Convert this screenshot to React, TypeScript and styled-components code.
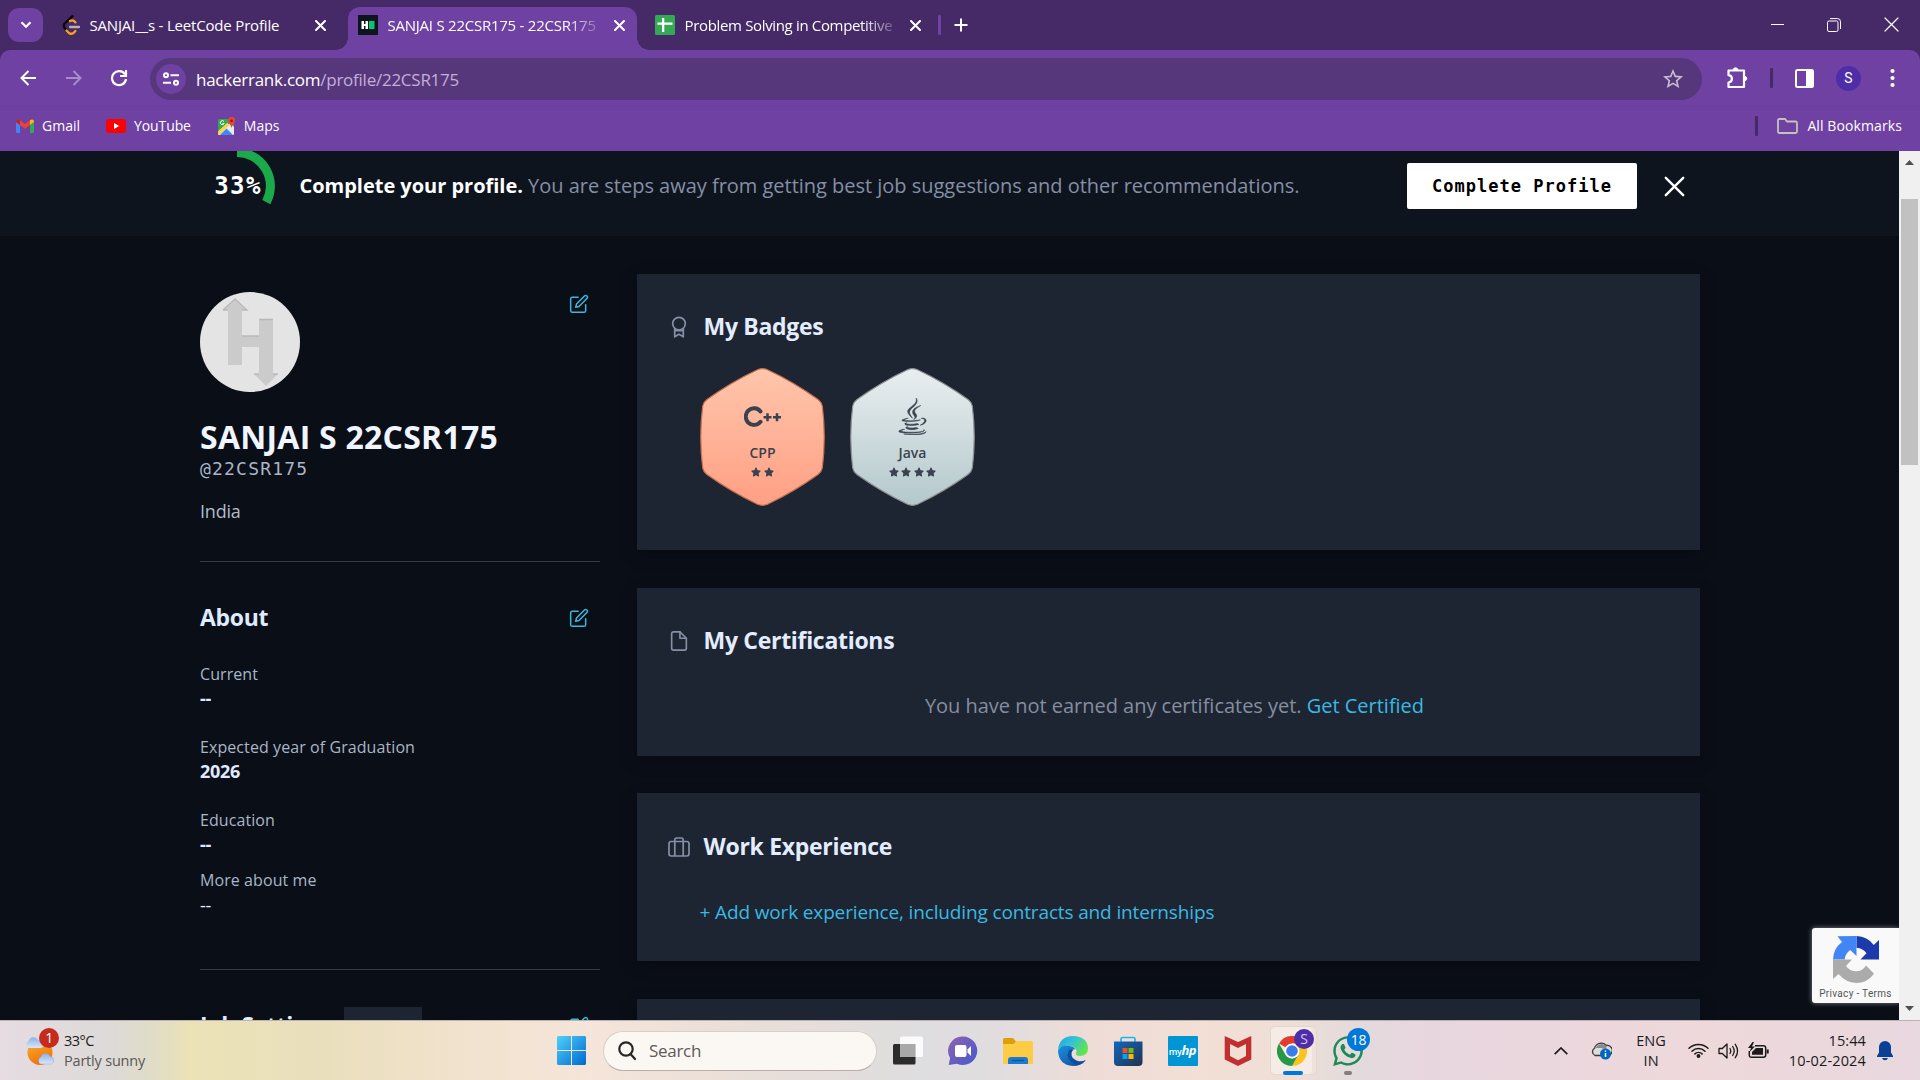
import React from "react";
import styled, { createGlobalStyle } from "styled-components";
import { FiEdit, FiFile } from "react-icons/fi";
import { FaJava, FaStar, FaWhatsapp } from "react-icons/fa";
import { MdStarOutline } from "react-icons/md";

const uiFont = `"Open Sans", "Noto Sans", sans-serif`;
const monoFont = `"DejaVu Sans Mono", monospace`;

const GlobalStyle = createGlobalStyle`
  * { box-sizing: border-box; }
  body { margin: 0; background: #0a0e17; font-family: ${uiFont}; overflow: hidden; }
  h1, h2, p { margin: 0; }
  svg { display: block; flex: none; }
`;

const Screen = styled.div`
  width: 1920px;
  height: 1080px;
  display: grid;
  grid-template-rows: 50px 57px 44px 869px 60px;
  background: #462a67;
  overflow: hidden;
`;

/* ---------- browser chrome ---------- */

const Label = styled.span<{ $size: number; $ls?: number; $color?: string; $w?: number }>`
  font-size: ${(p) => p.$size}px;
  letter-spacing: ${(p) => p.$ls ?? 0}px;
  color: ${(p) => p.$color ?? "#fff"};
  font-weight: ${(p) => p.$w ?? 400};
  white-space: nowrap;
  line-height: 20px;
`;

const TabStrip = styled.header`
  display: flex;
  align-items: flex-end;
  padding-left: 8px;
  background: #462a67;
`;

const TabSearch = styled.div`
  width: 35px;
  height: 34px;
  margin-bottom: 8px;
  border-radius: 11px;
  background: #6e41a2;
  display: grid;
  place-items: center;
`;

const Tab = styled.div<{ $width: number; $active?: boolean; $left: number; $right: number }>`
  width: ${(p) => p.$width}px;
  height: 43px;
  padding: 0 ${(p) => p.$right}px 7px ${(p) => p.$left}px;
  display: flex;
  align-items: center;
  background: ${(p) => (p.$active ? "#6e41a2" : "transparent")};
  border-radius: 12px 12px 0 0;
`;

const Flare = styled.div<{ $side: "left" | "right" }>`
  width: 12px;
  height: 12px;
  background: radial-gradient(circle at ${(p) => (p.$side === "left" ? "0 0" : "100% 0")}, transparent 11.5px, #6e41a2 12px);
`;

const TabTitle = styled(Label)<{ $fade?: boolean }>`
  flex: 1;
  margin: 0 18px 0 9.5px;
  ${(p) => p.$fade && "mask-image: linear-gradient(90deg, #000 calc(100% - 30px), rgba(0,0,0,.25) 100%);"}
`;

const StripEnd = styled.div`
  height: 43px;
  padding-bottom: 7px;
  display: flex;
  align-items: center;
  gap: 13px;
`;

const Divider = styled.div<{ $color: string }>`
  width: 3px;
  height: 20px;
  border-radius: 1px;
  background: ${(p) => p.$color};
`;

const WindowButtons = styled.div`
  margin-left: auto;
  height: 50px;
  padding: 0 21px 1px 0;
  display: flex;
  align-items: center;
  gap: 43px;
`;

const Toolbar = styled.div`
  background: #6e41a2;
  border-radius: 10px 10px 0 0;
  border-bottom: 1px solid #6a3e9d;
  padding: 8px 25px 6px 18px;
  display: flex;
  align-items: center;
`;

const NavButtons = styled.div`
  width: 132px;
  display: flex;
  align-items: center;
  gap: 27.5px;
  padding: 0 0 2px 1px;
`;

const AddressBar = styled.div`
  width: 1552px;
  height: 42px;
  border-radius: 21px;
  background: #57377b;
  display: flex;
  align-items: center;
  padding: 0 17px 0 6px;
`;

const SiteInfo = styled.div`
  width: 30px;
  height: 30px;
  border-radius: 50%;
  background: #6e41a2;
  display: grid;
  place-items: center;
  margin-right: 10px;
`;

const Url = styled(Label)`
  flex: 1;
  padding-top: 1px;
  span { color: #c3afd8; }
`;

const Actions = styled.div`
  flex: 1;
  display: grid;
  grid-template-columns: 22px 3px 19px 25px 5px;
  column-gap: 22px;
  align-items: center;
  padding: 0 0 2px 24px;
  svg:last-child { margin-left: 7px; }
`;

const Account = styled.div`
  width: 25px;
  height: 25px;
  border-radius: 50%;
  background: #4f2da8;
  color: #fff;
  font: 14px/25px Roboto, sans-serif;
  text-align: center;
`;

const Bookmarks = styled.div`
  background: #6e41a2;
  display: flex;
  align-items: center;
  padding: 0 18px 6px 16px;
`;

const Bookmark = styled.div<{ $gap: number; $after: number }>`
  display: flex;
  align-items: center;
  gap: ${(p) => p.$gap}px;
  margin-right: ${(p) => p.$after}px;
`;

const AllBookmarks = styled.div`
  margin-left: auto;
  display: flex;
  align-items: center;
  svg { margin: 0 9px 0 19px; }
`;

/* ---------- page ---------- */

const Viewport = styled.div`
  display: grid;
  grid-template-columns: 1899px 21px;
  overflow: hidden;
  min-height: 0;
`;

const Page = styled.main`
  position: relative;
  background: #0a0e17;
  overflow: hidden;
  height: 869px;
`;

const Banner = styled.section`
  height: 85px;
  background: #0e141e;
  display: flex;
  align-items: flex-start;
  padding-left: 199px;
`;

const Progress = styled.div`
  width: 76px;
  height: 76px;
  margin-top: -3px;
  margin-right: 24.5px;
  display: grid;
  place-items: center;
  > * { grid-area: 1 / 1; }
`;

const Percent = styled.span`
  font: 700 24px/30px ${monoFont};
  letter-spacing: 1.4px;
  margin-left: 2px;
  color: #fff;
`;

const BannerText = styled.p`
  width: 1107.5px;
  font-size: 20px;
  line-height: 30px;
  margin-top: 20px;
  letter-spacing: -0.018px;
  color: #858fa5;
  white-space: nowrap;
  b { color: #fff; }
`;

const CompleteButton = styled.button`
  width: 230px;
  height: 46px;
  margin: 12px 27px 0 0;
  border: 0;
  padding: 0;
  border-radius: 2px;
  background: #fff;
  color: #000;
  font: 700 17px ${monoFont};
  letter-spacing: 1px;
`;

const CloseIcon = styled.svg`
  margin-top: 25px;
`;

const Columns = styled.div`
  display: grid;
  grid-template-columns: 400px 1063px;
  column-gap: 37px;
  padding-left: 200px;
`;

const Sidebar = styled.aside`
  padding-top: 56px;
`;

const SideHead = styled.div<{ $iconTop: number }>`
  display: flex;
  justify-content: space-between;
  align-items: flex-start;
  padding-right: 11px;
  > svg:last-child { margin-top: ${(p) => p.$iconTop}px; }
`;

const Name = styled.h1`
  margin-top: 25px;
  font-size: 32px;
  line-height: 40px;
  letter-spacing: 0.25px;
  color: #f0f5ff;
  white-space: nowrap;
`;

const Handle = styled.p`
  font: 18px/24px ${monoFont};
  letter-spacing: 1.2px;
  color: #a9b6c6;
`;

const Country = styled.p`
  margin-top: 18px;
  font-size: 18px;
  line-height: 24px;
  letter-spacing: -0.2px;
  color: #b1bccb;
`;

const Rule = styled.div<{ $top: number }>`
  height: 1px;
  margin: ${(p) => p.$top}px 0 39px;
  background: #333946;
`;

const SideTitle = styled.h2<{ $width?: number }>`
  width: ${(p) => (p.$width ? `${p.$width}px` : "auto")};
  font-size: 23px;
  line-height: 32px;
  letter-spacing: -0.3px;
  color: #dfebff;
  white-space: nowrap;
`;

const Field = styled.div<{ $top: number; $plain?: boolean }>`
  margin-top: ${(p) => p.$top}px;
  font-size: 16px;
  line-height: 24px;
  letter-spacing: 0.08px;
  color: #a9b6c6;
  b {
    display: block;
    font-size: 18px;
    letter-spacing: -0.3px;
    color: #e0eaff;
    font-weight: ${(p) => (p.$plain ? 400 : 700)};
    padding-top: ${(p) => (p.$plain ? 1 : 0)}px;
  }
`;

const JobHead = styled.div`
  display: flex;
  align-items: flex-start;
  padding-right: 11px;
  > svg { margin: 7px 0 0 auto; }
`;

const Pill = styled.div`
  width: 78px;
  height: 32px;
  margin-top: -2px;
  background: #1e2532;
`;

const Cards = styled.div`
  padding-top: 38px;
  display: grid;
  row-gap: 37.5px;
`;

const Card = styled.section<{ $height: number; $top?: number }>`
  height: ${(p) => p.$height}px;
  padding: ${(p) => p.$top ?? 36}px 31px 0;
  background: #1e2532;
  box-shadow: 0 5px 15px rgba(0, 0, 0, 0.25);
`;

const CardHead = styled.div`
  display: grid;
  grid-template-columns: 22px auto;
  column-gap: 13.5px;
  align-items: center;
  justify-items: center;
  justify-content: start;
  svg { margin-top: 2px; }
`;

const CardTitle = styled.h2`
  font-size: 23px;
  line-height: 32px;
  letter-spacing: -0.3px;
  color: #e3edff;
`;

const CardText = styled.p<{ $center?: boolean }>`
  margin-top: 36px;
  padding-left: ${(p) => (p.$center ? 12 : 31.5)}px;
  font-size: ${(p) => (p.$center ? 20 : 19)}px;
  letter-spacing: ${(p) => (p.$center ? -0.02 : -0.14)}px;
  line-height: 28px;
  text-align: ${(p) => (p.$center ? "center" : "left")};
  color: #858ea0;
  a { color: #3ab9e2; }
`;

const BadgeRow = styled.div`
  display: flex;
  gap: 25px;
  margin: 26px 0 0 32px;
`;

const Hex = styled.div`
  width: 125px;
  height: 138px;
  display: grid;
  > * { grid-area: 1 / 1; }
`;

const HexBody = styled.div`
  display: flex;
  flex-direction: column;
  align-items: center;
  color: #39424e;
`;

const HexIcon = styled.div`
  height: 37px;
  margin-top: 30px;
  display: grid;
  place-items: center;
`;

const HexName = styled.span`
  margin-top: 8px;
  font-size: 14px;
  line-height: 20px;
  font-weight: 600;
`;

const Stars = styled.div`
  display: flex;
  gap: 2.3px;
  margin-top: 4px;
`;

const JavaIcon = styled(FaJava)`
  stroke: #39424e;
  stroke-width: 7px;
`;

const Captcha = styled.div`
  position: absolute;
  right: 0;
  top: 777px;
  width: 87px;
  height: 75px;
  padding-top: 8px;
  border-radius: 3px 0 0 3px;
  background: #f9f9f9;
  box-shadow: 0 0 5px #808080;
  display: flex;
  flex-direction: column;
  align-items: center;
  gap: 4px;
  font: 10px/14px Roboto, sans-serif;
  letter-spacing: 0.3px;
  color: #555;
  svg { margin-left: 2px; }
`;

const Scrollbar = styled.div`
  background: #f0f0f0;
  display: flex;
  flex-direction: column;
  align-items: center;
  padding: 9px 0;
`;

const Thumb = styled.div`
  width: 17px;
  height: 266px;
  margin: 34px 0 auto;
  background: #c1c1c1;
`;

/* ---------- taskbar ---------- */

const Taskbar = styled.footer`
  border-top: 1px solid #bdb2ad;
  display: grid;
  grid-template-columns: 532px 1fr auto;
  align-items: center;
  padding: 0 27px 1px 25px;
  background: linear-gradient(90deg, #e6dce2 0, #dddad8 110px, #e0dcc9 150px, #ebe2b6 190px, #eadfbd 330px, #f0e2cc 450px, #f5e5da 590px, #ebdfd8 720px, #dedddf 920px, #e1dddf 1000px, #efdcd6 1100px, #f2dfd5 1200px, #eedfd6 1290px, #e3dadd 1360px, #e8d6de 1430px, #ead7de 1540px, #eed8da 1700px, #e8d8df 1920px);
`;

const Weather = styled.div`
  display: flex;
  align-items: center;
  gap: 7px;
  height: 59px;
`;

const TwoLines = styled.div<{ $align?: string }>`
  display: flex;
  flex-direction: column;
  text-align: ${(p) => p.$align ?? "left"};
`;

const Center = styled.div`
  display: flex;
  align-items: center;
`;

const SearchBox = styled.div`
  width: 274px;
  height: 40px;
  margin: 0 3px 0 17px;
  border-radius: 20px;
  border: 1px solid #d9cfc8;
  border-bottom-color: #b9aea9;
  background: #fbf7f3;
  display: flex;
  align-items: center;
  gap: 12px;
  padding-left: 13px;
`;

const Slot = styled.div<{ $width?: number }>`
  position: relative;
  width: ${(p) => p.$width ?? 55}px;
  height: 59px;
  display: grid;
  place-items: center;
`;

const ActiveTile = styled.div`
  width: 47px;
  height: 49px;
  margin-left: 2px;
  padding-right: 4px;
  border-radius: 5px;
  background: #f6ece6;
  border: 1px solid #e3d8d1;
  box-shadow: inset -4px 0 #efe2da;
  display: grid;
  place-items: center;
`;

const Count = styled.span<{ $bg: string; $size: number; $x: number; $y: number; $color?: string }>`
  position: absolute;
  left: ${(p) => p.$x}px;
  top: ${(p) => p.$y}px;
  width: ${(p) => p.$size}px;
  height: ${(p) => p.$size}px;
  border-radius: 50%;
  background: ${(p) => p.$bg};
  color: ${(p) => p.$color ?? "#fff"};
  font-size: 14px;
  line-height: ${(p) => p.$size}px;
  letter-spacing: -0.3px;
  text-align: center;
`;

const Running = styled.span<{ $width: number; $color: string; $x: number }>`
  position: absolute;
  left: ${(p) => p.$x}px;
  bottom: 5px;
  width: ${(p) => p.$width}px;
  height: 4px;
  border-radius: 2px;
  background: ${(p) => p.$color};
`;

const Tray = styled.div`
  display: flex;
  align-items: center;
`;

const TrayItem = styled.div<{ $after: number }>`
  margin-right: ${(p) => p.$after}px;
`;

const HpTile = styled.div`
  width: 30px;
  height: 30px;
  background: #0096d6;
  color: #fff;
  font-size: 9px;
  line-height: 29px;
  text-align: center;
  letter-spacing: -0.4px;
  border-radius: 1px;
  font-weight: 600;
  i { font-size: 13px; font-weight: 700; }
`;

/* ---------- drawings ---------- */

const Cross = ({ size = 10, w = 2, color = "#fff" }: { size?: number; w?: number; color?: string }) => (
  <svg width={size} height={size} viewBox={`0 0 ${size} ${size}`} stroke={color} strokeWidth={w} strokeLinecap="round">
    <path d={`M1 1L${size - 1} ${size - 1}M${size - 1} 1L1 ${size - 1}`} />
  </svg>
);

const LeetCodeIcon = () => (
  <svg width="18" height="20" viewBox="0 0 18 20" fill="none" strokeLinecap="round" strokeLinejoin="round" strokeWidth="2.3">
    <path d="M10.5 1.2L2.6 8.6Q1 10.5 2.6 13L5 16" stroke="#070706" />
    <path d="M8 6Q10 4.600 12 6L13.400 7.400M4.500 15.500L7 18Q9 19.500 11.500 18L13.400 16" stroke="#ffa116" />
    <path d="M8 12H17" stroke="#b3b3b3" />
  </svg>
);

const HackerRankIcon = () => (
  <svg width="20" height="20" viewBox="0 0 20 20">
    <path fill="#0e141e" d="M0 0h20v20H0z" />
    <path fill="#fff" d="M3.500 6H6v3h1.500V6H10v8H7.500v-3H6v3H3.500z" />
    <path fill="#05c770" d="M11 6h5.500v8H11z" />
  </svg>
);

const SheetsIcon = () => (
  <svg width="20" height="20" viewBox="0 0 20 20">
    <rect width="20" height="20" rx="1.500" fill="#34a853" />
    <path fill="#fff" d="M2.500 7.500H7V3h2.300v4.500h8.200v2.300H9.300V17H7V9.800H2.500z" />
  </svg>
);

const GmailIcon = () => (
  <svg width="18" height="14" viewBox="0 0 18 14">
    <path fill="#4285f4" d="M0 3l4 3v8H1.300Q0 14 0 12.700z" />
    <path fill="#34a853" d="M14 6l4-3v9.700Q18 14 16.700 14H14z" />
    <path fill="#ea4335" d="M4 1.300L9 5l5-3.700V6L9 9.800 4 6z" />
    <path fill="#c5221f" d="M0 2.500Q0 .5 2 .4 3 .4 4 1.300V6L0 3z" />
    <path fill="#fbbc04" d="M18 2.500Q18 .5 16 .4q-1 0-2 .9V6l4-3z" />
  </svg>
);

const YouTubeIcon = () => (
  <svg width="20" height="14" viewBox="0 0 20 14">
    <rect width="20" height="14" rx="3" fill="#f00" />
    <path d="M8 4l5.200 3L8 10z" fill="#fff" />
  </svg>
);

const MapsIcon = () => (
  <svg width="18" height="18" viewBox="0 0 18 18">
    <rect x="0" y="2" width="16" height="16" rx="1.500" fill="#34a853" />
    <path d="M0 17L12 6l4 4v7q0 1-1 1H1z" fill="#e8eaed" />
    <path d="M2 18l6.500-6.500L15 18z" fill="#4285f4" />
    <path d="M0 14L9 5.500l2.500 2.500L1 18 0 17z" fill="#fbd24d" />
    <path d="M0 3.500Q0 2 1.500 2H10L8.500 6.500 0 14z" fill="#34a853" />
    <path d="M6 4.500A2 2 0 1 0 6.200 6.500H4.500" fill="none" stroke="#fff" strokeWidth="1" />
    <path d="M13.500 11q-.4-2.500-2-4-1.400-1.300-1.400-3.400a3.500 3.500 0 0 1 7 0q0 2-1.500 3.400-1.600 1.500-2.100 4z" fill="#ea4335" />
    <circle cx="13.600" cy="3.700" r="1.300" fill="#8c1b13" />
  </svg>
);

const AvatarLogo = () => (
  <svg width="100" height="100" viewBox="0 0 100 100">
    <circle cx="50" cy="50" r="50" fill="#e4e4e4" />
    <path d="M23 18L35 7l12 11h-5v26h17V27h14v55h5L66 94 54 82h5V55H42v18H28V18z" fill="#cbcbcb" />
    <path d="M23 18L35 7l12 11h-5M42 44h17M59 27.500h14M28 18h-5M54 82h5M73 82h5" fill="none" stroke="#b9b9b9" strokeWidth="1.300" />
  </svg>
);

const HexShape = ({ id, from, to, stroke }: { id: string; from: string; to: string; stroke: string }) => (
  <svg width="125" height="138" viewBox="0 0 125 138">
    <defs>
      <linearGradient id={id} x1="0" y1="0" x2="0" y2="1">
        <stop stopColor={from} />
        <stop offset="1" stopColor={to} />
      </linearGradient>
    </defs>
    <path
      d="M57.500 1.800Q62.500-.4 67.500 1.800C84 9.500 104 21.500 118 31.500Q121.500 34 122.300 38C124.800 58 124.800 80 122.300 100Q121.500 104 118 106.500C104 116.500 84 128.500 67.500 136.200Q62.500 138.400 57.500 136.200C41 128.500 21 116.500 7 106.500Q3.500 104 2.700 100C.2 80 .2 58 2.700 38Q3.500 34 7 31.500C21 21.500 41 9.500 57.500 1.800Z"
      fill={`url(#${id})`}
      stroke={stroke}
      strokeWidth="1.200"
    />
  </svg>
);

const CppIcon = () => (
  <svg width="37" height="21" viewBox="0 0 37 21" fill="none" stroke="#39424e">
    <path d="M16.500 5.400A8.300 8.300 0 1 0 16.500 15.800" strokeWidth="4" strokeLinecap="round" />
    <path d="M19.500 11.200h8M23.500 7.200v8M29 11.200h8M33 7.200v8" strokeWidth="2.500" />
  </svg>
);

const AwardIcon = () => (
  <svg width="16" height="22" viewBox="0 0 16 22" fill="none" stroke="#858fa5" strokeWidth="1.700" strokeLinejoin="round">
    <circle cx="8" cy="7.600" r="6.300" />
    <path d="M3.700 12.500V20.800L8 18.300l4.300 2.500v-8.300M3.700 14.600h8.600" />
  </svg>
);

const BriefcaseIcon = () => (
  <svg width="22" height="20" viewBox="0 0 22 20" fill="none" stroke="#858fa5" strokeWidth="1.700">
    <rect x="1" y="4.500" width="20" height="14.500" rx="2.200" />
    <path d="M6.800 19V3Q6.800 1 8.800 1h4.400q2 0 2 2v16" />
  </svg>
);

const RecaptchaLogo = () => (
  <svg width="47" height="47" viewBox="0 0 47 47">
    <path fill="#1c3aa9" d="M23.500 0q11 .3 17.200 9L46 4v19.500H27.500l6-6.300q-3.500-5-10-5.500z" />
    <path fill="#4285f4" d="M23.500 0v20l-6.300-6q-5 3.500-5.500 9.500H0Q.3 12.500 9 6L4.500.3z" />
    <path fill="#ababab" d="M0 23.500h19l-6 6.500q3.700 5.300 10.500 5.300 6 0 9.500-5.800l8 8.200Q34 47 23.500 47 12.500 46.500 5.600 38L0 43z" />
  </svg>
);

const WeatherIcon = () => (
  <svg width="32" height="32" viewBox="0 0 32 32">
    <defs>
      <linearGradient id="sun" x1="0" y1="0" x2="0.4" y2="1">
        <stop stopColor="#f9b52c" />
        <stop offset="1" stopColor="#f2700d" />
      </linearGradient>
      <linearGradient id="cloud" x1="0" y1="0" x2="0" y2="1">
        <stop stopColor="#8eb2e8" />
        <stop offset="1" stopColor="#d8e6fb" />
      </linearGradient>
    </defs>
    <circle cx="15" cy="17.500" r="12.500" fill="url(#sun)" />
    <path d="M3 13a4 4 0 0 1 .5-7A5.500 5.500 0 0 1 13.500 5 4 4 0 0 1 16 13z" fill="url(#cloud)" />
    <path d="M15.500 29a4 4 0 0 1 .3-7 5 5 0 0 1 9.300-.6 4 4 0 0 1 1.400 7.600z" fill="url(#cloud)" stroke="#86a9df" strokeWidth=".5" />
  </svg>
);

const WindowsLogo = () => (
  <svg width="29" height="29" viewBox="0 0 29 29">
    <defs>
      <linearGradient id="win" x1="0" y1="0" x2="1" y2="1">
        <stop stopColor="#4fd0fb" />
        <stop offset="1" stopColor="#0169cf" />
      </linearGradient>
    </defs>
    <path fill="url(#win)" d="M1 0h13v14H0V1zM15 0h13l1 1v13H15zM0 15h14v14H1l-1-1zM15 15h14v13l-1 1H15z" />
  </svg>
);

const TaskViewIcon = () => (
  <svg width="30" height="29" viewBox="0 0 30 29">
    <rect x="0" y="8" width="22.500" height="20.500" rx="1.500" fill="#2b2b2b" />
    <rect x="7" y="0.500" width="23" height="20.500" rx="1.500" fill="#fff" fillOpacity=".88" />
    <path d="M7 8h15.500v13H7z" fill="#a9a9a9" />
  </svg>
);

const ChatIcon = () => (
  <svg width="30" height="30" viewBox="0 0 30 30">
    <defs>
      <linearGradient id="chat" x1="0" y1="0" x2="1" y2="1">
        <stop stopColor="#8f63ae" />
        <stop offset="1" stopColor="#4559cf" />
      </linearGradient>
    </defs>
    <path d="M15 .5a14.300 14.300 0 1 1-6 27.300L.7 29l1.400-7A14.300 14.300 0 0 1 15 .5z" fill="url(#chat)" />
    <rect x="7" y="9" width="11.500" height="12" rx="2" fill="#fff" />
    <path d="M19.500 13.500L23 10v10l-3.500-3.500z" fill="#fff" />
  </svg>
);

const FolderIcon = () => (
  <svg width="30" height="28" viewBox="0 0 30 28">
    <path d="M0 2.500Q0 1 1.500 1H10l3 3.500V8H0z" fill="#dc9f0a" />
    <path d="M0 7h10.500l3-3H28.500Q30 4 30 5.500V27H0z" fill="#fdcb44" />
    <path d="M5 27v-4q0-3 3-3h14q3 0 3 3v4z" fill="#1a7bd3" />
    <path d="M9 23.500h12" stroke="#0d559b" strokeWidth="1.300" />
  </svg>
);

const EdgeIcon = () => (
  <svg width="30" height="30" viewBox="0 0 30 30">
    <defs>
      <linearGradient id="edgeTop" x1="0" y1="0" x2="1" y2=".5">
        <stop stopColor="#1ea5e6" />
        <stop offset=".5" stopColor="#34c3d4" />
        <stop offset="1" stopColor="#62e351" />
      </linearGradient>
      <linearGradient id="edgeLow" x1="0" y1="0" x2="1" y2="1">
        <stop stopColor="#1a93de" />
        <stop offset="1" stopColor="#10459b" />
      </linearGradient>
    </defs>
    <path d="M0 14Q1.500 0 15 0 29.500.5 30 12.500q-.3 7-7.500 7.500-5.500 0-4.500-3 1.300-2.500-.8-4.700Q14 9 8.500 9.500 2 10.500 0 14z" fill="url(#edgeTop)" />
    <path d="M0 14.500Q3 9 10 9.500q6.500 1 7.300 4-6-1-6 5 .5 8 9 8 4 .2 7.500-2.500Q23.500 30 15 30 .5 29 0 14.500z" fill="url(#edgeLow)" />
    <path d="M11.500 13.800q-3.300 5-.2 10 3.500 5 9.300 5 5-1.300 7.200-4.800-4.300 2.200-8.800.7-6-2.300-5.500-7.700.5-2.500 2.300-3.500-2.400-.7-4.300.3z" fill="#0d4f9f" />
  </svg>
);

const StoreIcon = () => (
  <svg width="30" height="30" viewBox="0 0 30 30">
    <defs>
      <linearGradient id="store" x1="0" y1="0" x2="1" y2="1">
        <stop stopColor="#0f69bd" />
        <stop offset="1" stopColor="#243150" />
      </linearGradient>
    </defs>
    <path d="M8 6V3q0-1.500 1.500-1.500h11Q22 1.500 22 3v3" fill="none" stroke="#1cb6f5" strokeWidth="1.700" />
    <path d="M1 5.500h28.500V26q0 4-4 4H5q-4 0-4-4z" fill="url(#store)" />
    <path fill="#f25022" d="M9.500 12h5v5h-5z" />
    <path fill="#7fba00" d="M15.500 12h5v5h-5z" />
    <path fill="#00a4ef" d="M9.500 18h5v5h-5z" />
    <path fill="#ffb900" d="M15.500 18h5v5h-5z" />
  </svg>
);

const McAfeeIcon = () => (
  <svg width="28" height="30" viewBox="0 0 28 30">
    <path d="M.7 0L14 6 27.300 0v23.500L14 30 .7 23.500zM6 8v12l8 4.300 8-4.300V8l-8 4z" fill="#c22f31" fillRule="evenodd" />
  </svg>
);

const ChromeIcon = () => (
  <svg width="30" height="30" viewBox="0 0 30 30">
    <path d="M15 15L2 7.500A15 15 0 0 1 28 7.500H15z" fill="#e33b2e" />
    <path d="M15 7.500h13A15 15 0 0 1 15 30l6.500-11.300z" fill="#fcc31e" />
    <path d="M2 7.500L8.500 18.700 15 22.500l6.300-3.600L15 30A15 15 0 0 1 2 7.500z" fill="#279847" />
    <circle cx="15" cy="15" r="7.500" fill="#fff" />
    <circle cx="15" cy="15" r="5.800" fill="#3a7ce8" />
  </svg>
);

const edit = <FiEdit size={20} color="#39b8de" strokeWidth={1.8} />;

/* ---------- app ---------- */

const badges = [
  { name: "CPP", stars: 2, icon: <CppIcon />, from: "#ffc6ab", to: "#ff9f84", stroke: "#c5714f" },
  { name: "Java", stars: 4, icon: <JavaIcon size={37} />, from: "#e9eef0", to: "#b4c8cc", stroke: "#8c9090" },
];

export default function App() {
  return (
    <Screen>
      <GlobalStyle />
      <TabStrip>
        <TabSearch>
          <svg width="12" height="8" viewBox="0 0 12 8" fill="none" stroke="#fff" strokeWidth="2.200">
            <path d="M1.500 1.300L6 5.800l4.500-4.500" />
          </svg>
        </TabSearch>
        <Tab $width={293} $left={19} $right={10}>
          <LeetCodeIcon />
          <TabTitle $size={15} $ls={-0.18}>SANJAI__s - LeetCode Profile</TabTitle>
          <Cross size={11} />
        </Tab>
        <Flare $side="left" />
        <Tab $width={289} $left={10} $right={14} $active>
          <HackerRankIcon />
          <TabTitle $size={15} $ls={-0.24} $fade>SANJAI S 22CSR175 - 22CSR175</TabTitle>
          <Cross size={11} />
        </Tab>
        <Flare $side="right" />
        <Tab $width={289} $left={6} $right={17}>
          <SheetsIcon />
          <TabTitle $size={15} $ls={-0.34} $fade>Problem Solving in Competitive</TabTitle>
          <Cross size={11} />
        </Tab>
        <StripEnd>
          <Divider $color="#6e41a2" />
          <svg width="14" height="14" viewBox="0 0 14 14" stroke="#fff" strokeWidth="2">
            <path d="M7 .5v13M.5 7h13" />
          </svg>
        </StripEnd>
        <WindowButtons>
          <svg width="13" height="13" viewBox="0 0 13 13" stroke="#fff" strokeWidth="1">
            <path d="M0 6.500h13" />
          </svg>
          <svg width="14" height="14" viewBox="0 0 14 14" fill="none" stroke="#fff" strokeWidth="1">
            <rect x=".5" y="3" width="10.500" height="10.500" rx="1.500" />
            <path d="M3 .6h7.500q3 0 3 3v7.400" />
          </svg>
          <Cross size={15} w={1.2} />
        </WindowButtons>
      </TabStrip>

      <Toolbar>
        <NavButtons>
          <svg width="18" height="18" viewBox="0 0 18 18" fill="none" stroke="#fff" strokeWidth="2">
            <path d="M17 9H3M9.500 2L2.500 9l7 7" />
          </svg>
          <svg width="18" height="18" viewBox="0 0 18 18" fill="none" stroke="#a98cc8" strokeWidth="2">
            <path d="M1 9h14M8.500 2l7 7-7 7" />
          </svg>
          <svg width="18" height="18" viewBox="0 0 18 18" fill="none" stroke="#fff" strokeWidth="2.200">
            <path d="M15 5.500A7 7 0 1 0 16 10" />
            <path d="M16 1v6h-6" />
          </svg>
        </NavButtons>
        <AddressBar>
          <SiteInfo>
            <svg width="16" height="14" viewBox="0 0 16 14" fill="none" stroke="#fff" strokeWidth="2">
              <circle cx="3" cy="3.200" r="2" />
              <path d="M7.500 3.200H16M0 10.800h8" />
              <circle cx="13" cy="10.800" r="2" />
            </svg>
          </SiteInfo>
          <Url $size={17} $ls={-0.25}>
            hackerrank.com<span>/profile/22CSR175</span>
          </Url>
          <MdStarOutline size={24} color="#c7bfd0" />
        </AddressBar>
        <Actions>
          <svg width="22" height="22" viewBox="0 0 22 22" fill="none" stroke="#fff" strokeWidth="2.200" strokeLinejoin="round">
            <path d="M2.500 3.500H18V20H2.500v-4.500c4.500-.3 4.500-7 0-7.300z" />
            <path d="M7 2.700a2.600 2.600 0 0 1 5 0zM18.800 9a2.600 2.600 0 0 1 0 5z" fill="#fff" strokeWidth="1" />
          </svg>
          <Divider $color="#462a67" />
          <svg width="19" height="19" viewBox="0 0 19 19" fill="none" stroke="#fff" strokeWidth="2">
            <rect x="1" y="1" width="17" height="17" rx="1.500" />
            <path d="M11.500 1h6v17h-6z" fill="#fff" strokeWidth="1" />
          </svg>
          <Account>S</Account>
          <svg width="5" height="20" viewBox="0 0 5 20" fill="#fff">
            <circle cx="2.500" cy="3" r="2.100" />
            <circle cx="2.500" cy="10" r="2.100" />
            <circle cx="2.500" cy="17" r="2.100" />
          </svg>
        </Actions>
      </Toolbar>

      <Bookmarks>
        <Bookmark $gap={8} $after={26}>
          <GmailIcon />
          <Label $size={14} $ls={0}>Gmail</Label>
        </Bookmark>
        <Bookmark $gap={8} $after={27}>
          <YouTubeIcon />
          <Label $size={14} $ls={-0.1}>YouTube</Label>
        </Bookmark>
        <Bookmark $gap={8} $after={0}>
          <MapsIcon />
          <Label $size={14} $ls={0}>Maps</Label>
        </Bookmark>
        <AllBookmarks>
          <Divider $color="#462a67" />
          <svg width="21" height="16" viewBox="0 0 21 16" fill="none" stroke="#c3c3bd" strokeWidth="1.800">
            <path d="M1 2.500Q1 1 2.500 1H8l2 2.500h8.500Q20 3.500 20 5v8.500q0 1.500-1.500 1.500h-16Q1 15 1 13.500z" />
          </svg>
          <Label $size={14} $ls={0.1}>All Bookmarks</Label>
        </AllBookmarks>
      </Bookmarks>

      <Viewport>
        <Page>
          <Banner>
            <Progress>
              <svg width="76" height="76" viewBox="0 0 76 76" fill="none">
                <path d="M38 4.500A33.500 33.500 0 0 1 67.300 54.100" stroke="#1ba94c" strokeWidth="9" />
              </svg>
              <Percent>33%</Percent>
            </Progress>
            <BannerText>
              <b>Complete your profile.</b> You are steps away from getting best job suggestions and other recommendations.
            </BannerText>
            <CompleteButton>Complete Profile</CompleteButton>
            <CloseIcon width="21" height="21" viewBox="0 0 21 21" stroke="#fff" strokeWidth="2.400" strokeLinecap="round">
              <path d="M1.800 1.800l17.400 17.400M19.200 1.800L1.800 19.200" />
            </CloseIcon>
          </Banner>

          <Columns>
            <Sidebar>
              <SideHead $iconTop={2}>
                <AvatarLogo />
                {edit}
              </SideHead>
              <Name>SANJAI S 22CSR175</Name>
              <Handle>@22CSR175</Handle>
              <Country>India</Country>
              <Rule $top={38} />
              <SideHead $iconTop={7}>
                <SideTitle>About</SideTitle>
                {edit}
              </SideHead>
              <Field $top={29}>Current<b>--</b></Field>
              <Field $top={25}>Expected year of Graduation<b>2026</b></Field>
              <Field $top={25}>Education<b>--</b></Field>
              <Field $top={12} $plain>More about me<b>--</b></Field>
              <Rule $top={52} />
              <JobHead>
                <SideTitle $width={144}>Job Settings</SideTitle>
                <Pill />
                {edit}
              </JobHead>
            </Sidebar>

            <Cards>
              <Card $height={276}>
                <CardHead>
                  <AwardIcon />
                  <CardTitle>My Badges</CardTitle>
                </CardHead>
                <BadgeRow>
                  {badges.map((b) => (
                    <Hex key={b.name}>
                      <HexShape id={`hex-${b.name}`} from={b.from} to={b.to} stroke={b.stroke} />
                      <HexBody>
                        <HexIcon>{b.icon}</HexIcon>
                        <HexName>{b.name}</HexName>
                        <Stars>
                          {Array.from({ length: b.stars }, (_, i) => (
                            <FaStar key={i} size={10} />
                          ))}
                        </Stars>
                      </HexBody>
                    </Hex>
                  ))}
                </BadgeRow>
              </Card>
              <Card $height={168}>
                <CardHead>
                  <FiFile size={22} color="#858fa5" strokeWidth={1.8} />
                  <CardTitle>My Certifications</CardTitle>
                </CardHead>
                <CardText $center>
                  You have not earned any certificates yet. <a>Get Certified</a>
                </CardText>
              </Card>
              <Card $height={168} $top={37}>
                <CardHead>
                  <BriefcaseIcon />
                  <CardTitle>Work Experience</CardTitle>
                </CardHead>
                <CardText>
                  <a>+ Add work experience, including contracts and internships</a>
                </CardText>
              </Card>
              <Card $height={168} />
            </Cards>
          </Columns>

          <Captcha>
            <RecaptchaLogo />
            <span>Privacy - Terms</span>
          </Captcha>
        </Page>
        <Scrollbar>
          <svg width="9" height="5" viewBox="0 0 9 5" fill="#505050"><path d="M4.500 0L9 5H0z" /></svg>
          <Thumb />
          <svg width="9" height="5" viewBox="0 0 9 5" fill="#505050"><path d="M4.500 5L9 0H0z" /></svg>
        </Scrollbar>
      </Viewport>

      <Taskbar>
        <Weather>
          <Slot $width={32}>
            <WeatherIcon />
            <Count $bg="#c42b1c" $size={20} $x={14} $y={7}>1</Count>
          </Slot>
          <TwoLines>
            <Label $size={14.5} $ls={-0.5} $color="#1b1b1b">33°C</Label>
            <Label $size={14.5} $ls={-0.2} $color="#5a5753">Partly sunny</Label>
          </TwoLines>
        </Weather>
        <Center>
          <WindowsLogo />
          <SearchBox>
            <svg width="20" height="20" viewBox="0 0 20 20" fill="none" stroke="#262626" strokeWidth="2.200" strokeLinecap="round">
              <circle cx="9" cy="8" r="6.700" />
              <path d="M13.500 13l4.500 5" />
            </svg>
            <Label $size={17} $ls={-0.3} $color="#5d5a58">Search</Label>
          </SearchBox>
          <Slot><TaskViewIcon /></Slot>
          <Slot><ChatIcon /></Slot>
          <Slot><FolderIcon /></Slot>
          <Slot><EdgeIcon /></Slot>
          <Slot><StoreIcon /></Slot>
          <Slot><HpTile>my<i>hp</i></HpTile></Slot>
          <Slot><McAfeeIcon /></Slot>
          <Slot>
            <ActiveTile><ChromeIcon /></ActiveTile>
            <Count $bg="#4f2da8" $color="#d5c6f2" $size={20} $x={29} $y={8}>S</Count>
            <Running $width={20} $color="#0078d7" $x={18} />
          </Slot>
          <Slot>
            <FaWhatsapp size={34} color="#1d8a57" />
            <Count $bg="#0078d7" $size={23} $x={27} $y={7}>18</Count>
            <Running $width={8} $color="#857d7f" $x={24} />
          </Slot>
        </Center>
        <Tray>
          <TrayItem $after={23}>
            <svg width="14" height="8" viewBox="0 0 14 8" fill="none" stroke="#1b1b1b" strokeWidth="1.700">
              <path d="M.7 7.200L7 1l6.300 6.200" />
            </svg>
          </TrayItem>
          <TrayItem $after={24}>
            <svg width="21" height="18" viewBox="0 0 21 18">
              <path d="M4 13.500a4 4 0 0 1-.5-7.200A7 7 0 0 1 15.500 3.500 5 5 0 0 1 17 13.500z" fill="#dcdcdc" stroke="#3a3a3a" strokeWidth="1.300" />
              <path d="M5 6A6 6 0 0 1 15 4l1 4-6-2z" fill="#8b8b8b" />
              <circle cx="14.500" cy="12" r="5.500" fill="#0067c0" />
              <path d="M14.500 11v4M14.500 8.500v1.300" stroke="#fff" strokeWidth="1.500" />
            </svg>
          </TrayItem>
          <TrayItem $after={22}>
            <TwoLines $align="center">
              <Label $size={14.5} $color="#1b1b1b">ENG</Label>
              <Label $size={14.5} $color="#1b1b1b">IN</Label>
            </TwoLines>
          </TrayItem>
          <TrayItem $after={9}>
            <svg width="21" height="15" viewBox="0 0 21 15" fill="none" stroke="#1b1b1b" strokeWidth="1.500" strokeLinecap="round">
              <path d="M1 5.300a13.500 13.500 0 0 1 19 0M4 8.200a9.300 9.300 0 0 1 13 0M6.900 10.900a5.200 5.200 0 0 1 7.200 0" />
              <circle cx="10.500" cy="13" r="1.200" fill="#1b1b1b" />
            </svg>
          </TrayItem>
          <TrayItem $after={9}>
            <svg width="21" height="16" viewBox="0 0 21 16" fill="none" stroke="#1b1b1b" strokeWidth="1.300" strokeLinejoin="round" strokeLinecap="round">
              <path d="M1 5.500h3.300L9 1v14l-4.700-4.500H1z" />
              <path d="M12 5.500q1.500 2.500 0 5M14.700 3.500q3 4.500 0 9M17.300 1.300q4.500 6.700 0 13.400" />
            </svg>
          </TrayItem>
          <TrayItem $after={20}>
            <svg width="21" height="17" viewBox="0 0 21 17" fill="none" stroke="#1b1b1b" strokeWidth="1.500">
              <path d="M7 3.700h8.500q2.200 0 2.200 2.200v7.200q0 2.200-2.200 2.200H3.500q-2.200 0-2.200-2.200V9" />
              <path d="M8 6h7v6.800H4V10z" fill="#1b1b1b" stroke="none" />
              <path d="M4.500 0L0 6h3L1.500 10 7 4.500H4L6 0z" fill="#1b1b1b" stroke="none" />
              <path d="M19.700 7.500v4" strokeWidth="2" />
            </svg>
          </TrayItem>
          <TrayItem $after={11}>
            <TwoLines $align="right">
              <Label $size={14.5} $color="#1b1b1b" $ls={0.1}>15:44</Label>
              <Label $size={14.5} $color="#1b1b1b" $ls={0.15}>10-02-2024</Label>
            </TwoLines>
          </TrayItem>
          <svg width="16" height="20" viewBox="0 0 16 20" fill="#0a3f96">
            <path d="M8 0a6 6 0 0 1 6 6v5.500l2 3.500v1H0v-1l2-3.500V6A6 6 0 0 1 8 0zM5 17h6q-.8 2.300-3 2.300T5 17z" />
          </svg>
        </Tray>
      </Taskbar>
    </Screen>
  );
}
